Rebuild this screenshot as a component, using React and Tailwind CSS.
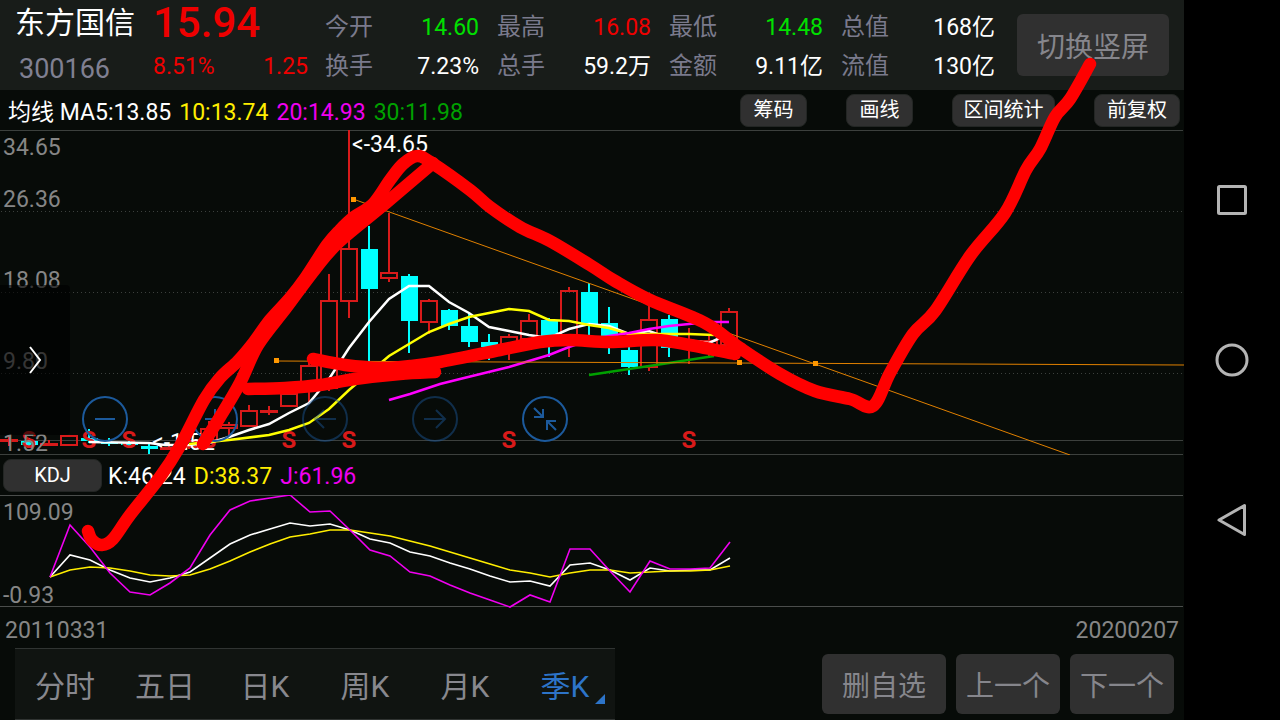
import { useState } from "react";

const quotes = [
  { label: "今开", value: "14.60", color: "text-[#00e000]" },
  { label: "最高", value: "16.08", color: "text-[#ee0000]" },
  { label: "最低", value: "14.48", color: "text-[#00e000]" },
  { label: "总值", value: "168亿", color: "text-white" },
  { label: "换手", value: "7.23%", color: "text-white" },
  { label: "总手", value: "59.2万", color: "text-white" },
  { label: "金额", value: "9.11亿", color: "text-white" },
  { label: "流值", value: "130亿", color: "text-white" },
];

const periods = ["分时", "五日", "日K", "周K", "月K", "季K"];

// x, body top, body bottom, high, low, up
const candles = [
  [9, 440, 441, 436, 446, true],
  [29, 441, 445, 438, 447, false],
  [49, 444, 445, 440, 446, true],
  [69, 436, 445, 435, 446, true],
  [89, 438, 441, 429, 443, false],
  [109, 442, 443, 438, 446, false],
  [129, 443, 445, 441, 446, false],
  [149, 446, 449, 443, 454, false],
  [169, 448, 449, 446, 450, true],
  [189, 441, 447, 438, 449, true],
  [209, 429, 440, 421, 442, true],
  [229, 425, 428, 422, 436, true],
  [249, 411, 426, 405, 427, true],
  [269, 411, 412, 406, 415, true],
  [289, 394, 406, 392, 407, true],
  [309, 366, 388, 362, 403, true],
  [329, 301, 388, 274, 391, true],
  [349, 249, 301, 130, 318, true],
  [369, 249, 289, 226, 362, false],
  [389, 273, 278, 213, 282, true],
  [409, 276, 321, 274, 353, false],
  [429, 301, 322, 299, 334, true],
  [449, 310, 326, 309, 330, false],
  [469, 326, 342, 313, 347, false],
  [489, 342, 347, 334, 360, false],
  [509, 337, 346, 334, 360, true],
  [529, 321, 339, 314, 342, true],
  [549, 320, 338, 318, 357, false],
  [569, 291, 342, 287, 357, true],
  [589, 292, 324, 283, 335, false],
  [609, 323, 338, 307, 354, false],
  [629, 350, 367, 340, 375, false],
  [649, 320, 367, 306, 371, true],
  [669, 319, 348, 315, 357, false],
  [689, 341, 342, 328, 364, true],
  [709, 341, 346, 335, 358, true],
  [729, 312, 345, 308, 352, true],
];

const ma5 = "89,442 149,443 165,445 189,445 209,443 229,437 249,430 269,424 289,413 309,403 329,379 349,348 369,322 389,299 409,286 429,286 449,302 469,313 489,327 509,331 529,335 549,338 569,329 589,324 609,326 629,334 649,331 669,338 709,343 720,338 729,334";
const ma10 = "189,444 209,442 229,440 269,435 289,430 309,423 329,409 349,390 369,373 389,356 409,344 429,332 449,324 469,317 489,313 509,309 529,311 549,320 569,321 589,325 609,328 629,334 649,334 689,334 714,335";
const ma20 = "389,400 410,394 440,384 460,379 509,367 549,355 569,347 589,340 609,336 629,333 649,329 669,326 689,324 709,322 729,322";
const ma30 = "589,375 629,369 669,363 714,356";

const kLine = [577, 555, 560, 570, 578, 582, 578, 572, 558, 544, 535, 529, 523, 526, 524, 530, 539, 543, 552, 556, 563, 569, 576, 582, 581, 586, 565, 563, 570, 580, 568, 571, 570, 570, 558];
const dLine = [577, 570, 567, 568, 571, 575, 576, 575, 569, 561, 552, 544, 537, 534, 530, 530, 533, 536, 541, 546, 552, 558, 564, 570, 573, 577, 573, 570, 570, 573, 572, 571, 571, 570, 566];
const jLine = [577, 525, 547, 573, 592, 595, 583, 568, 535, 510, 501, 498, 495, 512, 511, 530, 550, 556, 572, 576, 585, 593, 600, 607, 595, 602, 549, 549, 571, 592, 561, 569, 569, 568, 542];

// freehand strokes drawn over the whole screen
const strokes = [
  [[88, 531], [92, 540], [102, 545], [113, 539], [130, 515], [160, 477], [180, 446], [204, 400], [220, 378], [238, 361], [254, 342], [270, 320], [290, 298], [306, 277], [327, 245], [340, 230], [354, 217], [373, 204], [390, 180], [403, 164], [417, 156], [432, 163], [470, 190], [490, 207], [520, 227], [550, 241], [590, 265], [615, 281], [650, 300], [705, 323], [740, 348], [780, 374], [815, 391], [850, 399], [873, 406], [890, 373], [913, 334], [935, 311], [970, 256], [1005, 213], [1026, 170], [1040, 149], [1055, 117], [1070, 99], [1090, 64]],
  [[203, 444], [220, 417], [240, 383], [258, 345], [286, 308], [316, 268], [339, 242], [386, 203], [433, 163]],
  [[248, 389], [285, 388], [320, 385], [355, 379], [400, 374], [435, 372]],
  [[313, 359], [345, 365], [380, 368], [410, 366], [440, 362], [500, 350], [540, 342], [570, 340], [610, 342], [655, 340], [690, 345], [735, 354]],
];

const toPoints = (ys) => ys.map((y, i) => `${50 + i * 20},${y}`).join(" ");

// smooth curve through the points
const smooth = (pts) => {
  let d = `M${pts[0][0]} ${pts[0][1]}`;
  for (let i = 0; i < pts.length - 1; i++) {
    const a = pts[i - 1] || pts[i];
    const b = pts[i];
    const c = pts[i + 1];
    const e = pts[i + 2] || c;
    d += ` C${b[0] + (c[0] - a[0]) / 6} ${b[1] + (c[1] - a[1]) / 6} ${c[0] - (e[0] - b[0]) / 6} ${c[1] - (e[1] - b[1]) / 6} ${c[0]} ${c[1]}`;
  }
  return d;
};

const Candle = ({ data }) => {
  const [x, top, bottom, high, low, up] = data;
  if (!up) {
    return (
      <g fill="#00ffff">
        <rect x={x - 1} y={high} width="2" height={low - high} />
        <rect x={x - 8} y={top} width="17" height={Math.max(bottom - top, 2)} />
      </g>
    );
  }
  return (
    <g stroke="#d81a1a" strokeWidth="2" fill="none">
      <path d={`M${x} ${high}V${top}M${x} ${bottom}V${low}`} />
      <rect x={x - 8} y={top} width="16" height={bottom - top} />
    </g>
  );
};

const PriceChart = () => (
  <svg viewBox="0 130 1184 325" className="block h-auto w-full text-[23px]" aria-label="季K线图">
    <g stroke="#3c403d" shapeRendering="crispEdges">
      <path d="M0 130.5H1183M0 440.5H1183M0 454.5H1183" />
      <path d="M1 211.5H1183M1 292.5H1183M1 373.5H1183" strokeDasharray="1 3" strokeWidth="1" />
    </g>
    {candles.map((c) => <Candle key={c[0]} data={c} />)}
    <g fill="#d81a1a" textAnchor="middle" className="text-2xl font-bold">
      {[29, 89, 129, 209, 289, 349, 509, 689].map((x) => <text key={x} x={x} y="448">S</text>)}
    </g>
    <g fill="none" strokeWidth="2.5">
      <polyline points={ma5} stroke="#ffffff" />
      <polyline points={ma10} stroke="#ffff00" />
      <polyline points={ma20} stroke="#ff00ff" />
      <polyline points={ma30} stroke="#00a000" />
    </g>
    <g stroke="#e08000" fill="none">
      <path d="M353 199L1070 455" />
      <path d="M276 361L1184 365" />
    </g>
    <g fill="#ff9800">
      <rect x="351" y="197" width="5" height="5" />
      <rect x="274" y="358" width="5" height="5" />
      <rect x="737" y="360" width="5" height="5" />
      <rect x="813" y="361" width="5" height="5" />
    </g>
    <g fill="#ffffff">
      <text x="352" y="152">&lt;-34.65</text>
      <text x="152" y="450">&lt;-1.52</text>
    </g>
    <g fill="#868686">
      <text x="3" y="155">34.65</text>
      <text x="3" y="207">26.36</text>
      <text x="3" y="288">18.08</text>
      <text x="3" y="369">9.80</text>
      <text x="3" y="451">1.52</text>
    </g>
  </svg>
);

const KdjChart = () => (
  <svg viewBox="0 495 1184 113" className="block h-auto w-full text-[23px]" aria-label="KDJ">
    <path d="M0 495.5H1183M0 606.5H1183" stroke="#4a4d4b" />
    <g fill="#868686">
      <text x="3" y="520">109.09</text>
      <text x="3" y="603">-0.93</text>
    </g>
    <g fill="none" strokeWidth="1.6">
      <polyline points={toPoints(kLine)} stroke="#ffffff" />
      <polyline points={toPoints(dLine)} stroke="#ffee00" />
      <polyline points={toPoints(jLine)} stroke="#f000f0" />
    </g>
  </svg>
);

const RoundButton = ({ label, dim, children }) => (
  <button aria-label={label} className={dim ? "size-[46px] opacity-45" : "size-[46px]"}>
    <svg viewBox="0 0 46 46" fill="none" stroke="#1c5a9c" strokeWidth="2" className="size-full">
      <circle cx="23" cy="23" r="22" />
      {children}
    </svg>
  </button>
);

const SmallButton = ({ className, children }) => (
  <button className={`h-[33px] rounded-lg border border-[#232624] bg-[#303030] text-xl leading-none text-white ${className}`}>{children}</button>
);

const BigButton = ({ className, children }) => (
  <button className={`rounded-md bg-[#303030] pt-[6px] text-[28px] text-[#86868c] ${className}`}>{children}</button>
);

const App = () => {
  const [period, setPeriod] = useState("季K");

  return (
    <div className="flex min-h-screen bg-black font-[Roboto,'Noto_Sans_CJK_SC',sans-serif]">
      <main className="relative flex min-w-0 flex-1 flex-col bg-[#070b08]">
        <header className="flex h-[90px] items-start bg-[#181c19] pr-[15px]">
          <div className="flex w-[153px] shrink-0 flex-col pl-[15px]">
            <h1 className="text-[30px] leading-[45px] text-white">东方国信</h1>
            <span className="pl-1 text-[27px] leading-[49px] text-[#808092]">300166</span>
          </div>
          <div className="w-[155px] shrink-0 text-[23px] leading-[43px] text-[#ee0000]">
            <div className="text-[42px] font-medium leading-[45px]">15.94</div>
            <div className="flex justify-between">
              <span>8.51%</span>
              <span>1.25</span>
            </div>
          </div>
          <dl className="ml-[17px] grid flex-1 grid-cols-4 gap-x-[18px] pt-2 leading-[39px]">
            {quotes.map((q) => (
              <div key={q.label} className="flex justify-between whitespace-nowrap">
                <dt className="text-2xl leading-[39px] text-[#7a7a8c]">{q.label}</dt>
                <dd className={`text-[23px] ${q.color}`}>{q.value}</dd>
              </div>
            ))}
          </dl>
          <BigButton className="ml-[22px] h-[62px] w-[152px] self-center">切换竖屏</BigButton>
        </header>

        <div className="flex h-10 items-center justify-between pl-2 pr-1">
          <p className="flex gap-2 whitespace-nowrap pt-[6px] text-[23px]">
            <span className="text-white">均线 MA5:13.85</span>
            <span className="text-[#ffee00]">10:13.74</span>
            <span className="text-[#f000f0]">20:14.93</span>
            <span className="text-[#00a000]">30:11.98</span>
          </p>
          <div className="flex gap-[39px]">
            <SmallButton className="w-[67px]">筹码</SmallButton>
            <SmallButton className="w-[67px]">画线</SmallButton>
            <SmallButton className="w-[103px]">区间统计</SmallButton>
            <SmallButton className="w-[86px]">前复权</SmallButton>
          </div>
        </div>

        <section className="relative">
          <PriceChart />
          <button aria-label="展开" className="absolute bottom-5 left-0 flex h-[150px] w-[70px] items-center justify-center rounded-r bg-black/60">
            <svg viewBox="0 0 14 28" className="h-7 w-[14px]" fill="none" stroke="#fff" strokeWidth="2">
              <path d="M2 1L12 14L2 27" />
            </svg>
          </button>
          <div className="absolute bottom-[13px] left-[82px] flex gap-16">
            <RoundButton label="缩小"><path d="M13 23H33" /></RoundButton>
            <RoundButton label="放大"><path d="M13 23H33M23 13V33" /></RoundButton>
            <RoundButton label="左移" dim><path d="M34 23H13M22 14L13 23L22 32" /></RoundButton>
            <RoundButton label="右移" dim><path d="M12 23H33M24 14L33 23L24 32" /></RoundButton>
            <RoundButton label="收起"><path d="M12 12L21 21M21 13V21H12M34 34L25 25M25 34V25H34" /></RoundButton>
          </div>
        </section>

        <div className="flex h-10 items-center gap-[6px] pl-[3px] text-[23px]">
          <SmallButton className="w-[99px]">KDJ</SmallButton>
          <p className="flex gap-2 pt-1">
            <span className="text-white">K:46.24</span>
            <span className="text-[#ffee00]">D:38.37</span>
            <span className="text-[#f000f0]">J:61.96</span>
          </p>
        </div>
        <KdjChart />
        <div className="flex h-10 items-center justify-between px-[5px] pt-[6px] text-[23px] text-[#868686]">
          <span>20110331</span>
          <span>20200207</span>
        </div>

        <footer className="flex h-[72px] items-center justify-between pl-[15px] pr-[10px]">
          <nav className="flex h-full border-y border-[#303432] bg-[#101411]">
            {periods.map((p) => (
              <button key={p} onClick={() => setPeriod(p)} className={`relative w-[100px] pt-1 text-[30px] ${p === period ? "text-[#2d74c9]" : "text-[#88888e]"}`}>
                {p}
                {p === period && (
                  <svg viewBox="0 0 10 10" className="absolute right-[10px] bottom-[15px] size-[10px]" fill="#2d74c9">
                    <path d="M10 0V10H0Z" />
                  </svg>
                )}
              </button>
            ))}
          </nav>
          <div className="flex gap-[10px]">
            <BigButton className="h-[60px] w-[124px]">删自选</BigButton>
            <BigButton className="h-[60px] w-[104px]">上一个</BigButton>
            <BigButton className="h-[60px] w-[104px]">下一个</BigButton>
          </div>
        </footer>

        <svg viewBox="0 0 1184 720" className="pointer-events-none absolute inset-x-0 top-0 h-auto w-full" fill="none" stroke="#ff0000" strokeWidth="12.5" strokeLinecap="round" strokeLinejoin="round">
          {strokes.map((s, i) => <path key={i} d={smooth(s)} />)}
        </svg>
      </main>

      {/* system navigation keys */}
      <aside className="flex w-24 shrink-0 flex-col items-center justify-center gap-32">
        <button aria-label="最近任务" className="size-8">
          <svg viewBox="0 0 32 32" fill="none" stroke="#b4b4b4" strokeWidth="3"><rect x="2.5" y="2.5" width="27" height="27" rx="1" /></svg>
        </button>
        <button aria-label="主页" className="size-8">
          <svg viewBox="0 0 32 32" className="overflow-visible" fill="none" stroke="#b4b4b4" strokeWidth="3"><circle cx="16" cy="16" r="15" /></svg>
        </button>
        <button aria-label="返回" className="size-8">
          <svg viewBox="0 0 32 32" className="overflow-visible" fill="none" stroke="#b4b4b4" strokeWidth="3" strokeLinejoin="round"><path d="M28.500 1.500V30.500L3 16Z" /></svg>
        </button>
      </aside>
    </div>
  );
};

export default App;
